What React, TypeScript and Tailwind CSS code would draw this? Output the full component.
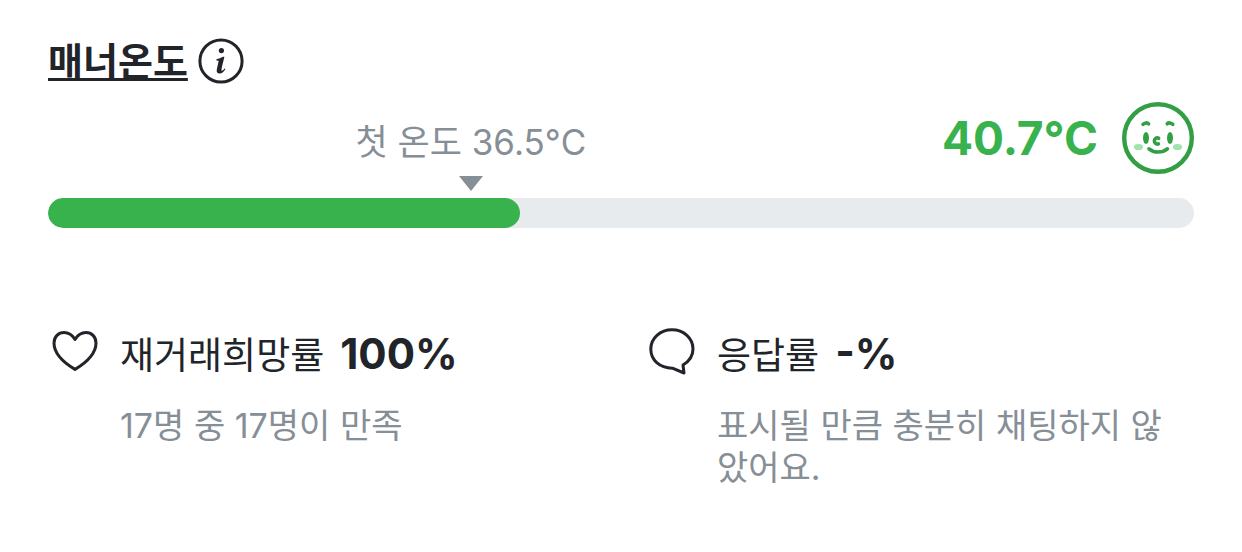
import React from "react";

interface StatProps {
  icon: React.ReactNode;
  label: string;
  value: string;
  description: string;
}

const InfoIcon = () => (
  <svg viewBox="0 0 46 46" className="size-[46px] shrink-0" fill="none" aria-hidden="true">
    <circle cx="23" cy="23" r="21.1" stroke="#212429" strokeWidth="3" />
    <circle cx="23.4" cy="12.6" r="2.6" fill="#212429" />
    <path
      d="M18.4 21.2c2.4-.2 4.6-1.2 6.600-2.400h1.400c-.9 4.200-2.300 8.800-2.900 12.600-.2 1.300.3 1.600 1 1.200.8-.5 1.500-1.300 2.100-2.200l.9.7c-1.500 2.700-3.500 4.500-5.900 4.500-2.300 0-3.300-1.500-2.800-4.100.5-2.900 1.300-5.700 1.900-8.700l-2.300-.3z"
      fill="#212429"
    />
  </svg>
);

const SmileIcon = () => (
  <svg viewBox="0 0 72 72" className="size-[72px] shrink-0" fill="none" role="img" aria-label="미소">
    <circle cx="36" cy="36" r="33.8" stroke="#329f45" strokeWidth="4.4" />
    <ellipse cx="16.5" cy="45" rx="4.6" ry="3.1" fill="#9fe3ad" />
    <ellipse cx="55.5" cy="45" rx="4.6" ry="3.1" fill="#9fe3ad" />
    <ellipse cx="24" cy="36" rx="3" ry="6" fill="#329f45" />
    <ellipse cx="48" cy="36" rx="3" ry="6" fill="#329f45" />
    <g stroke="#329f45" strokeWidth="3.6" strokeLinecap="round">
      <path d="M21 22.4c1.4-1.7 4.4-2 5.600-.6" />
      <path d="M45.2 21.8c1.4-1.4 4.200-1.100 5.600.6" />
      <path d="M36.6 36.2c-2.4-1-4.200.6-4.200 2.800 0 2.400 2 3.600 4 2.800" />
      <path d="M27 46.8c4.6 4.2 13.6 4.2 18.4 0" />
    </g>
  </svg>
);

const HeartIcon = () => (
  <svg viewBox="0 0 54 54" className="size-[54px] shrink-0" fill="none" aria-hidden="true">
    <path
      d="M27 44.4C21 40.8 6 30.8 6 18 6 11.6 10.6 7.6 16 7.6c4.8 0 8.4 2.6 11 6.8 2.6-4.2 6.2-6.8 11-6.8 5.400 0 10 4 10 10.400 0 12.800-15 22.800-21 26.400z"
      stroke="#212429"
      strokeWidth="3"
      strokeLinejoin="round"
    />
  </svg>
);

const ChatIcon = () => (
  <svg viewBox="0 0 54 54" className="size-[54px] shrink-0" fill="none" aria-hidden="true">
    <path
      d="M27 4.8c11.8 0 21 8.4 21 19.2 0 6.8-4 12.4-10 16l1 8-11.6-4.8C14.4 42.800 5.800 35 5.800 24 5.800 13.200 15.200 4.800 27 4.800z"
      stroke="#212429"
      strokeWidth="3"
      strokeLinejoin="round"
    />
  </svg>
);

const Stat: React.FC<StatProps> = ({ icon, label, value, description }) => {
  return (
    <div className="flex gap-[18px]">
      {icon}
      <div className="pt-1 pr-4">
        <p className="flex items-baseline gap-4 text-[37px] leading-[50px] text-[#212429]">
          <span>{label}</span>
          <strong className="text-[42px] font-bold">{value}</strong>
        </p>
        <p className="mt-6 text-[34px] leading-[42px] text-[#868e96]">{description}</p>
      </div>
    </div>
  );
};

const App: React.FC = () => {
  return (
    <main className="bg-white px-12 pt-9 pb-16 font-['Inter','Noto_Sans_CJK_KR',sans-serif]">
      <button type="button" className="flex items-center gap-2.5 text-[#212429]">
        <span className="text-[38px] leading-[50px] font-bold underline decoration-3 underline-offset-3 [text-decoration-skip-ink:none]">
          매너온도
        </span>
        <InfoIcon />
      </button>

      <section className="mt-4">
        <div className="flex items-start justify-between">
          <div className="flex w-[73.8%] flex-col items-center pt-4 text-[#868e96]">
            <span className="text-[35px] leading-[48px]">첫 온도 36.5°C</span>
            <svg viewBox="0 0 24 15" className="mt-2.5 h-[15px] w-6" aria-hidden="true">
              <path d="M0 0h24L12 15z" fill="#868e96" />
            </svg>
          </div>
          <div className="flex items-center gap-6">
            <strong className="text-[46px] leading-[72px] font-bold text-[#38b24d]">40.7°C</strong>
            <SmileIcon />
          </div>
        </div>
        <div
          role="progressbar"
          aria-label="매너온도"
          aria-valuenow={40.7}
          className="mt-[7px] h-[30px] overflow-hidden rounded-[15px] bg-[#e8ebee]"
        >
          <div className="h-full w-[41.2%] rounded-[15px] bg-[#38b24d]" />
        </div>
      </section>

      <section className="mt-[97px] grid grid-cols-2 gap-12">
        <Stat
          icon={<HeartIcon />}
          label="재거래희망률"
          value="100%"
          description="17명 중 17명이 만족"
        />
        <Stat
          icon={<ChatIcon />}
          label="응답률"
          value="-%"
          description="표시될 만큼 충분히 채팅하지 않았어요."
        />
      </section>
    </main>
  );
};

export default App;
